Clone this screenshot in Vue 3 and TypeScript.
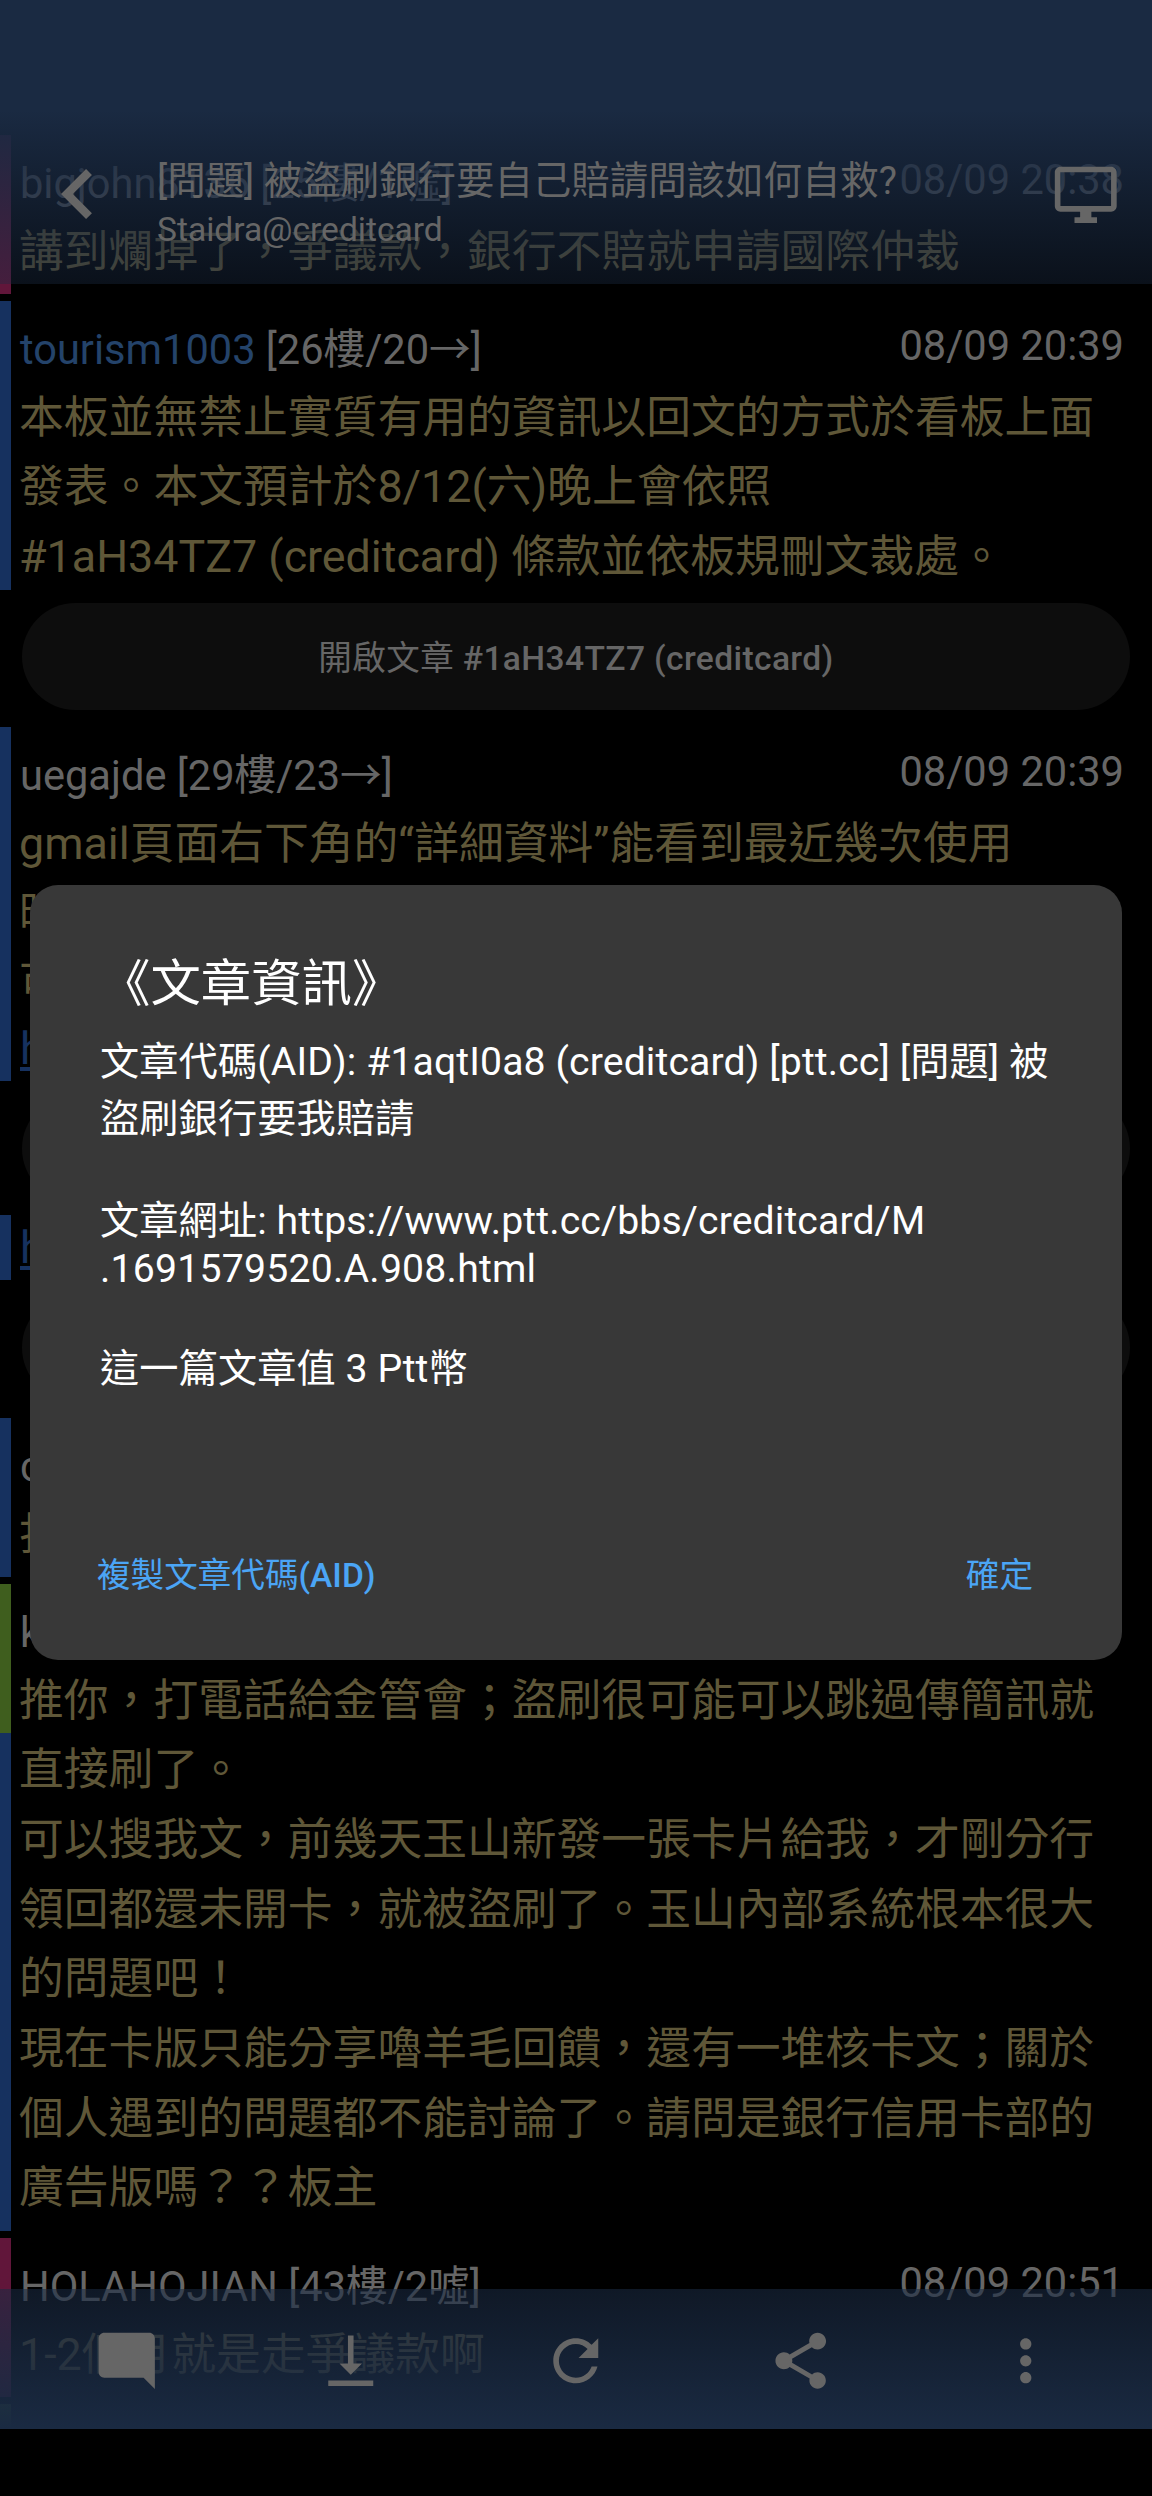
<script setup lang="ts">
type Kind = 'boo' | 'arrow' | 'push'

interface Segment {
  kind: Kind
  user?: string
  known?: boolean
  floor?: string
  time?: string
  lines?: string[]
  link?: string
  last?: boolean
  button?: { label: string; target: string }
}

const segments: Segment[] = [
  { kind: 'boo', user: 'bigjohn8136', floor: '[25樓/1噓]', time: '08/09 20:38', lines: ['講到爛掉了，爭議款，銀行不賠就申請國際仲裁'], last: true },
  {
    kind: 'arrow', user: 'tourism1003', known: true, floor: '[26樓/20→]', time: '08/09 20:39',
    lines: ['本板並無禁止實質有用的資訊以回文的方式於看板上面', '發表。本文預計於8/12(六)晚上會依照', '#1aH34TZ7 (creditcard) 條款並依板規刪文裁處。'],
    button: { label: '開啟文章', target: '#1aH34TZ7 (creditcard)' },
  },
  {
    kind: 'arrow', user: 'uegajde', floor: '[29樓/23→]', time: '08/09 20:39',
    lines: ['gmail頁面右下角的“詳細資料”能看到最近幾次使用', '時', '可'], link: 'h', button: { label: '', target: '' },
  },
  { kind: 'arrow', link: 'h', button: { label: '', target: '' } },
  { kind: 'arrow', user: 'c', lines: ['打'], last: true },
  { kind: 'push', user: 'k', lines: ['推你，打電話給金管會；盜刷很可能可以跳過傳簡訊就'] },
  {
    kind: 'arrow',
    lines: [
      '直接刷了。',
      '可以搜我文，前幾天玉山新發一張卡片給我，才剛分行',
      '領回都還未開卡，就被盜刷了。玉山內部系統根本很大',
      '的問題吧！',
      '現在卡版只能分享嚕羊毛回饋，還有一堆核卡文；關於',
      '個人遇到的問題都不能討論了。請問是銀行信用卡部的',
      '廣告版嗎？？板主',
    ],
    last: true,
  },
  { kind: 'boo', user: 'HOLAHOJIAN', floor: '[43樓/2噓]', time: '08/09 20:51', lines: ['1-2個月就是走爭議款啊'], last: true },
  { kind: 'push', lines: [''] },
]

const tools: { name: string; path: string }[] = [
  { name: '留言', path: 'M21.99 4c0-1.1-.89-2-1.99-2H4c-1.1 0-2 .9-2 2v12c0 1.1.9 2 2 2h14l4 4-.01-18z' },
  { name: '到底部', path: 'M16 13h-3V3h-2v10H8l4 4 4-4zM4 19v2h16v-2H4z' },
  { name: '重新整理', path: 'M17.65 6.35C16.2 4.9 14.21 4 12 4c-4.42 0-7.99 3.58-7.99 8s3.57 8 7.99 8c3.73 0 6.84-2.55 7.73-6h-2.08c-.82 2.33-3.04 4-5.65 4-3.31 0-6-2.69-6-6s2.69-6 6-6c1.66 0 3.14.69 4.22 1.78L13 11h7V4l-2.35 2.35z' },
  { name: '分享', path: 'M18 16.08c-.76 0-1.44.3-1.96.77L8.91 12.7c.05-.23.09-.46.09-.7s-.04-.47-.09-.7l7.05-4.11c.54.5 1.25.81 2.04.81 1.66 0 3-1.34 3-3s-1.34-3-3-3-3 1.34-3 3c0 .24.04.47.09.7L8.04 9.81C7.5 9.31 6.79 9 6 9c-1.66 0-3 1.34-3 3s1.34 3 3 3c.79 0 1.5-.31 2.04-.81l7.12 4.16c-.05.21-.08.43-.08.65 0 1.61 1.31 2.92 2.92 2.92s2.92-1.31 2.92-2.92-1.31-2.92-2.92-2.92z' },
  { name: '更多', path: 'M12 8c1.1 0 2-.9 2-2s-.9-2-2-2-2 .9-2 2 .9 2 2 2zm0 2c-1.1 0-2 .9-2 2s.9 2 2 2 2-.9 2-2-.9-2-2-2zm0 6c-1.1 0-2 .9-2 2s.9 2 2 2 2-.9 2-2-.9-2-2-2z' },
]
</script>

<template>
  <div class="screen">
    <main class="thread">
      <template v-for="(s, i) in segments" :key="i">
        <section class="segment" :class="[s.kind, { last: s.last }]">
          <header v-if="s.user" class="meta">
            <span class="who"><span :class="{ known: s.known }">{{ s.user }}</span> {{ s.floor }}</span>
            <time class="time">{{ s.time }}</time>
          </header>
          <p v-for="(line, n) in s.lines" :key="n" class="line">{{ line }}</p>
          <a v-if="s.link" class="link">{{ s.link }}</a>
        </section>
        <button v-if="s.button" class="open" :class="{ spaced: segments[i + 1]?.user }">{{ s.button.label }} <b>{{ s.button.target }}</b></button>
      </template>
    </main>

    <header class="topbar">
      <svg class="back" viewBox="8 6 7.41 12"><path d="M15.41 7.41L14 6l-6 6 6 6 1.41-1.41L10.83 12z" /></svg>
      <div class="titles">
        <h1 class="title">[問題] 被盜刷銀行要自己賠請問該如何自救?</h1>
        <div class="author">Staidra@creditcard</div>
      </div>
      <svg class="desktop" viewBox="0 0 24 24"><path d="M21 2H3c-1.1 0-2 .9-2 2v12c0 1.1.9 2 2 2h7v2H8v2h8v-2h-2v-2h7c1.1 0 2-.9 2-2V4c0-1.1-.9-2-2-2zm0 14H3V4h18v12z" /></svg>
    </header>

    <nav class="toolbar">
      <span v-for="t in tools" :key="t.name" class="tool">
        <svg viewBox="0 0 24 24"><path :d="t.path" /></svg>
      </span>
    </nav>

    <div class="dialog" role="dialog">
      <h2 class="heading">《文章資訊》</h2>
      <div class="info">
        <p class="han">文章代碼(AID): #1aqtI0a8 (creditcard) [ptt.cc] [問題] 被</p>
        <p class="han">盜刷銀行要我賠請</p>
        <p class="gap"></p>
        <p class="han">文章網址: https://www.ptt.cc/bbs/creditcard/M</p>
        <p class="latin">.1691579520.A.908.html</p>
        <p class="gap"></p>
        <p class="han">這一篇文章值 3 Ptt幣</p>
      </div>
      <div class="actions">
        <span>複製文章代碼<b>(AID)</b></span>
        <span>確定</span>
      </div>
    </div>
  </div>
</template>

<style>
body {
  margin: 0;
  background: #000;
}
</style>

<style scoped>
.screen {
  position: relative;
  width: 1152px;
  height: 2496px;
  overflow: hidden;
  background: #000;
  color: #666;
  font-family: Roboto, 'Noto Sans CJK TC', sans-serif;
}
p, h1, h2 {
  margin: 0;
  font-weight: 400;
}
b {
  font-weight: 500;
}
svg {
  display: block;
  fill: #666;
}
.thread {
  display: flex;
  flex-direction: column;
  height: 2429px;
  overflow: hidden;
  padding-top: 134.5px;
  box-sizing: border-box;
}
.segment {
  flex: none;
  border-left: 11px solid;
  padding-left: 9px;
}
.segment.last {
  padding-bottom: 10px;
  margin-bottom: 6.5px;
}
.boo { border-color: #61163a; }
.arrow { border-color: #16315f; }
.push { border-color: #3f5e1e; }
.meta {
  display: flex;
  justify-content: space-between;
  height: 80px;
  padding-right: 28px;
  font-size: 41.6px;
  line-height: 48px;
  white-space: pre;
}
.who { padding-top: 25px; }
.time { padding-top: 21px; }
.known { color: #24436a; }
.line {
  height: 69.67px;
  margin-left: -1px;
  line-height: 73px;
  font-size: 44.8px;
  color: #5f5738;
  white-space: pre;
}
.link {
  display: block;
  height: 65px;
  line-height: 65px;
  font-size: 44.8px;
  color: #16315f;
  text-decoration: underline;
}
.open {
  flex: none;
  height: 107px;
  margin: 13.5px 22px;
  padding: 4px 0 0;
  border: 0;
  border-radius: 54px;
  background: #0d0d0d;
  color: #666;
  font: 400 33.6px/103px Roboto, 'Noto Sans CJK TC', sans-serif;
  letter-spacing: 0.37px;
  white-space: pre;
}
.open.spaced {
  margin-bottom: 17px;
}
.topbar {
  position: absolute;
  inset: 0 0 auto;
  height: 284px;
  box-sizing: border-box;
  padding: 150px 33px 0 61px;
  display: flex;
  background: linear-gradient(#1a2a42 0, #1a2a42 110px, rgba(26, 42, 66, 0.4) 284px);
}
.back {
  width: 31px;
  height: 50px;
  margin-top: 19px;
}
.titles {
  flex: 1;
  margin-left: 65px;
  padding-top: 2px;
  white-space: nowrap;
}
.title {
  font-size: 38.45px;
  line-height: 58px;
}
.author {
  font-size: 33.6px;
  line-height: 40px;
}
.desktop {
  width: 67.5px;
  height: 67.5px;
  margin-top: 11px;
}
.toolbar {
  position: absolute;
  inset: 2289px 0 67px;
  display: flex;
  align-items: center;
  padding: 4px 14px 0;
  background: linear-gradient(rgba(26, 42, 66, 0.58), #1a2a42);
}
.tool {
  flex: 1;
  display: flex;
  justify-content: center;
}
.tool svg {
  width: 67.5px;
  height: 67.5px;
}
.dialog {
  position: absolute;
  top: 885px;
  left: 30px;
  width: 1092px;
  height: 775px;
  box-sizing: border-box;
  padding: 61px 70px 0;
  border-radius: 28px;
  background: #383838;
  color: #fff;
}
.heading {
  font-size: 50.4px;
  line-height: 76px;
}
.info {
  height: 500px;
  padding-top: 12px;
  font-size: 39.2px;
  white-space: nowrap;
}
.han {
  height: 56.5px;
  line-height: 56.5px;
  letter-spacing: 0.11px;
}
.latin {
  height: 46.5px;
  line-height: 40px;
  letter-spacing: 0.22px;
}
.gap { height: 45.7px; }
.actions {
  display: flex;
  justify-content: space-between;
  margin: 17px 19px 0 -3px;
  font-size: 33.6px;
  line-height: 50px;
  color: #4ba5f5;
}
</style>
